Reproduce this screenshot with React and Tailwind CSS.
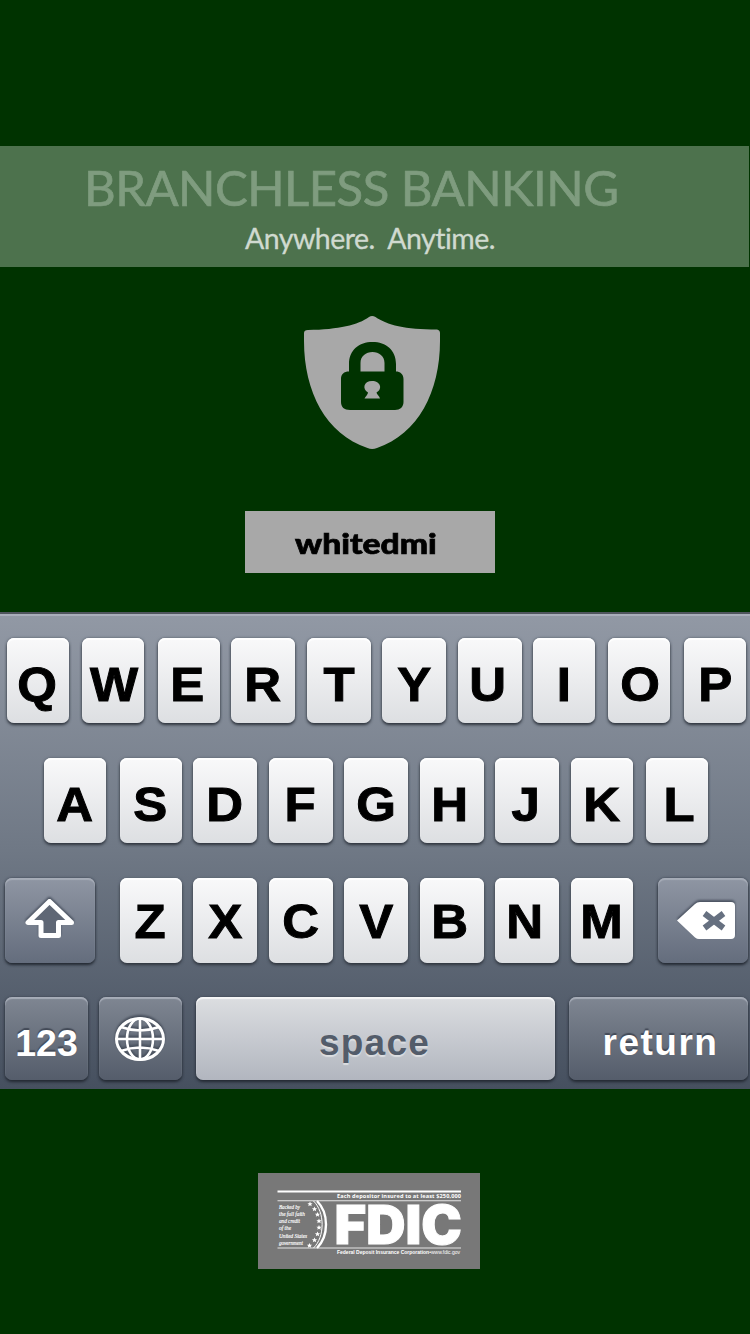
import React from "react";

const rowOne = [
  ["Q", "w-[62px] mr-[13px]", "-left-[1px]"],
  ["W", "w-[62px] mr-[14px]", "left-[1px]"],
  ["E", "w-[62px] mr-[11px]", "-left-[2px]"],
  ["R", "w-[64px] mr-[12px]", "left-0"],
  ["T", "w-[64px] mr-[11px]", "left-0"],
  ["Y", "w-[64px] mr-[12px]", "left-0"],
  ["U", "w-[64px] mr-[11px]", "-left-[2px]"],
  ["I", "w-[62px] mr-[13px]", "left-0"],
  ["O", "w-[62px] mr-[14px]", "left-[1px]"],
  ["P", "w-[62px]", "left-0"],
];
const rowTwo = [
  ["A", "w-[62px] mr-[14px]", "left-0"],
  ["S", "w-[62px] mr-[11px]", "-left-[1px]"],
  ["D", "w-[64px] mr-[12px]", "left-0"],
  ["F", "w-[64px] mr-[11px]", "-left-[1px]"],
  ["G", "w-[64px] mr-[12px]", "left-0"],
  ["H", "w-[64px] mr-[11px]", "-left-[2px]"],
  ["J", "w-[64px] mr-[12px]", "-left-[1px]"],
  ["K", "w-[62px] mr-[13px]", "left-0"],
  ["L", "w-[62px]", "left-[2px]"],
];
const rowThree = [
  ["Z", "w-[62px] mr-[11px]", "-left-[1px]"],
  ["X", "w-[64px] mr-[12px]", "left-0"],
  ["C", "w-[64px] mr-[11px]", "left-0"],
  ["V", "w-[64px] mr-[12px]", "left-0"],
  ["B", "w-[64px] mr-[11px]", "-left-[2px]"],
  ["N", "w-[64px] mr-[12px]", "-left-[2px]"],
  ["M", "w-[62px]", "-left-[1px]"],
];

function LetterKeys({ keys, pad }) {
  return keys.map(([letter, size, nudge]) => (
    <div
      key={letter}
      className={`flex h-[85px] shrink-0 justify-center rounded-[7px] bg-linear-to-b from-[#f9f9fa] to-[#dddfe2] shadow-[inset_0_2px_1px_#ffffff,0_2px_3px_#30363f,0_0_3px_#5c6470] ${size}`}
    >
      <span
        className={`relative scale-x-[1.04] text-[49px] leading-[56px] font-bold text-black [-webkit-text-stroke:1px_#000] ${pad} ${nudge}`}
      >
        {letter}
      </span>
    </div>
  ));
}

const darkKey =
  "flex shrink-0 items-center justify-center rounded-[7px] shadow-[inset_0_2px_1px_#a7adb8,0_2px_3px_#232932,0_0_3px_#404956]";

function Shield() {
  return (
    <svg className="block" width="136" height="134" viewBox="304 316 136 134">
      <path
        fill="#a8a8a8"
        d="M369 317Q372 315 375.500 317C387 325 405 329.500 437 329.500Q440 330 440 333V341C440 392 418 434 377 448Q372 450 367.500 448C326 434 304 392 304 341V333Q304 330 308 330C339 329.500 358 325 369 317Z"
      />
      <path
        fill="#003300"
        fillRule="evenodd"
        d="M349 371.500V364C349 350 359 342 372.500 342S396 350 396 364V371.500C400 371.500 403.500 374 403.500 379V402C403.500 407 400 410 395 410H350C344 410 341 407 341 402V379C341 374 344 371.500 349 371.500ZM360.500 371.500H384.500V363C384.500 356 379 352 372.500 352S360.500 356 360.500 363Z"
      />
      <path
        fill="#a8a8a8"
        d="M368 392.500C362 389 363.500 381 372 381S383 389 376.500 392.500C376.500 394 379.500 396 380 398.500H364.500C366 396 368 394 368 392.500Z"
      />
    </svg>
  );
}

function ShiftIcon() {
  return (
    <svg className="relative -top-[2px] drop-shadow-[0_-2px_1px_#4a5260]" width="52" height="44" viewBox="0 0 52 44">
      <path
        d="M25.500 4.500L4 25.500H17V38.500H34.500V25.500H47.500Z"
        fill="#5f6775"
        stroke="#fff"
        strokeWidth="5"
        strokeLinejoin="round"
      />
    </svg>
  );
}

function BackspaceIcon() {
  return (
    <svg className="relative left-[3px] drop-shadow-[0_-2px_1px_#4a5260]" width="58" height="37" viewBox="0 0 58 37">
      <path fill="#fff" d="M0 18.500L18 2Q20 0 23 0H54Q58 0 58 4V33Q58 37 54 37H22Q20 37 18 35.500Z" />
      <path stroke="#667080" strokeWidth="6" d="M27.500 11.500L46.500 26M46.500 11.500L27.500 26" />
    </svg>
  );
}

function GlobeIcon() {
  return (
    <svg
      className="relative -left-[1px] drop-shadow-[0_-2px_1px_#434b58]"
      width="52"
      height="46"
      viewBox="0 0 52 46"
      fill="none"
      stroke="#fff"
      strokeWidth="2.600"
    >
      <ellipse cx="26" cy="23" rx="23.500" ry="20.500" strokeWidth="3" />
      <ellipse cx="26" cy="23" rx="13" ry="20.500" />
      <path d="M26 2V44M2 23H50M7 11Q26 18 45 11M7 35Q26 28 45 35" />
    </svg>
  );
}

const starPositions = [
  [310, 1204], [314.500, 1209], [317.500, 1214.500], [319, 1221], [319, 1227.500], [317.500, 1234], [314.500, 1240], [309.500, 1245.500],
];
const oathLines = ["Backed by", "the full faith", "and credit", "of the", "United States", "government"];
const oathWidths = [21, 26, 21, 12, 28, 24];

function FdicLogo() {
  return (
    <svg className="block" width="222" height="96" viewBox="258 1173 222 96" fill="#fff">
      <path fill="#787878" d="M258 1173H480V1269H258Z" />
      <path d="M277.500 1190.500H461V1192.500H277.500Z" />
      <path opacity=".8" d="M277.500 1200.300H461V1201.300H277.500ZM277.500 1247.500H461V1248.500H277.500Z" />
      <text x="337" y="1198" fontFamily="Open Sans, sans-serif" fontWeight="700" fontSize="5.600" textLength="124">
        Each depositor insured to at least $250,000
      </text>
      {oathLines.map((line, i) => (
        <text
          key={line}
          x="279"
          y={1209 + i * 7.150}
          fontFamily="Liberation Serif, serif"
          fontStyle="italic"
          fontSize="5.800"
          stroke="#fff"
          strokeWidth=".15"
          textLength={oathWidths[i]}
          lengthAdjust="spacingAndGlyphs"
        >
          {line}
        </text>
      ))}
      {starPositions.map(([x, y]) => (
        <path
          key={y}
          transform={`translate(${x} ${y})`}
          d="M0 -2.600L.8 -.8L2.600 -.7L1.200 .5L1.700 2.300L0 1.300L-1.700 2.300L-1.200 .5L-2.600 -.7L-.8 -.8Z"
        />
      ))}
      <path fill="none" stroke="#fff" strokeWidth="1" d="M313.500 1201C325 1212 325 1237 313.500 1248" />
      <path fill="none" stroke="#fff" strokeWidth="2.400" d="M317 1201C329 1213 329 1236 317 1248" />
      <text
        x="334.500"
        y="1244"
        fontFamily="Inter, sans-serif"
        fontWeight="900"
        fontSize="53"
        stroke="#fff"
        strokeWidth="1"
        textLength="127.500"
        lengthAdjust="spacingAndGlyphs"
      >
        FDIC
      </text>
      <text x="337" y="1254.300" fontFamily="Liberation Sans, sans-serif" fontSize="5" textLength="123">
        <tspan fontWeight="700">Federal Deposit Insurance Corporation</tspan>•www.fdic.gov
      </text>
    </svg>
  );
}

export default function App() {
  return (
    <main className="flex h-[1334px] w-[750px] flex-col overflow-hidden bg-[#003300] font-['Liberation_Sans',Arial,sans-serif]">
      <header className="mt-[146px] flex h-[121px] w-[749px] shrink-0 flex-col bg-[#4d724d] font-['Lato',sans-serif] whitespace-pre">
        <h1 className="mt-[11px] ml-[84px] h-[60px] text-[49px] leading-[60px] tracking-[-0.500px] text-[#7f9c7f] [-webkit-text-stroke:0.700px_#7f9c7f]">
          BRANCHLESS BANKING
        </h1>
        <p className="mt-[1px] ml-[245px] h-[40px] text-[28.500px] leading-[40px] tracking-[-0.520px] text-[#d0dad0] [-webkit-text-stroke:0.300px_#d0dad0]">
          Anywhere.  Anytime.
        </p>
      </header>

      <div className="mt-[49px] ml-[304px] shrink-0">
        <Shield />
      </div>

      <div className="mt-[61px] ml-[245px] flex h-[62px] w-[250px] shrink-0 items-center bg-[#a8a8a8] pl-[50px] font-['Lato',sans-serif] text-[28px] leading-[62px] font-black text-black">
        <span className="relative top-[1px] origin-left scale-x-[1.2] [-webkit-text-stroke:0.700px_#000]">whitedmi</span>
      </div>

      <section className="mt-[39px] flex h-[477px] shrink-0 flex-col bg-linear-to-b from-[#9299a5] via-[#6f7885] to-[#46505f] shadow-[inset_0_2px_0_#4f555d,inset_0_4px_0_#a9aeba]">
        <div className="mt-[26px] flex pl-[7px]">
          <LetterKeys keys={rowOne} pad="top-[18px]" />
        </div>
        <div className="mt-[35px] flex pl-[44px]">
          <LetterKeys keys={rowTwo} pad="top-[18px]" />
        </div>
        <div className="mt-[35px] flex pl-[5px]">
          <div className={`${darkKey} mr-[25px] h-[85px] w-[90px] bg-linear-to-b from-[#8f96a3] to-[#646d7d]`}>
            <ShiftIcon />
          </div>
          <LetterKeys keys={rowThree} pad="top-[15px]" />
          <div className={`${darkKey} ml-[25px] h-[85px] w-[90px] bg-linear-to-b from-[#8f96a3] to-[#646d7d]`}>
            <BackspaceIcon />
          </div>
        </div>
        <div className="mt-[34px] flex pl-[5px] font-bold">
          <div className={`${darkKey} mr-[11px] h-[83px] w-[83px] bg-linear-to-b from-[#7f8692] to-[#555d6b]`}>
            <span className="relative top-[5px] text-[37.500px] text-white [text-shadow:0_-2px_1px_#434a57]">123</span>
          </div>
          <div className={`${darkKey} mr-[14px] h-[83px] w-[83px] bg-linear-to-b from-[#7f8692] to-[#555d6b]`}>
            <GlobeIcon />
          </div>
          <div className="mr-[14px] flex h-[83px] w-[359px] shrink-0 items-center justify-center rounded-[7px] bg-linear-to-b from-[#dcdee1] to-[#b2b6bf] shadow-[inset_0_2px_1px_#f5f6f7,0_2px_3px_#232932,0_0_3px_#404956]">
            <span className="relative top-[4px] left-[-1px] text-[37px] tracking-[1.200px] text-[#535c6a] [text-shadow:0_2px_1px_#dcdee1]">space</span>
          </div>
          <div className={`${darkKey} h-[83px] w-[179px] bg-linear-to-b from-[#7f8692] to-[#555d6b]`}>
            <span className="relative top-[4px] left-[2px] text-[37px] tracking-[1.500px] text-white [text-shadow:0_-2px_1px_#434a57]">return</span>
          </div>
        </div>
      </section>

      <div className="mt-[84px] ml-[258px] shrink-0">
        <FdicLogo />
      </div>
    </main>
  );
}
